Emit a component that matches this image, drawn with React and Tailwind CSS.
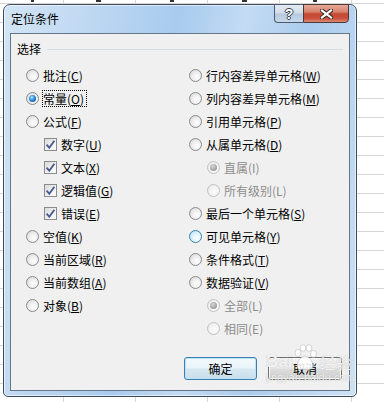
import React from "react";

const FONT = "font-['Noto_Sans_CJK_SC','Microsoft_YaHei',sans-serif]";

function Radio({ checked, disabled, hover }) {
  let ring =
    "border-[#8a8b8c] bg-[radial-gradient(circle_at_62%_62%,#ffffff_0%,#f0f0f0_40%,#d2d2d2_100%)]";
  if (hover)
    ring =
      "border-[#3c7fb1] bg-[radial-gradient(circle_at_62%_62%,#ffffff_0%,#e3f5fe_40%,#a8dbf6_100%)]";
  if (disabled)
    ring =
      "border-[#c2c2c2] bg-[radial-gradient(circle_at_62%_62%,#fcfcfc_0%,#f3f3f3_50%,#e3e3e3_100%)]";
  return (
    <span
      className={`flex h-[13px] w-[13px] shrink-0 items-center justify-center rounded-full border ${ring}`}
    >
      {checked && (
        <span
          className={`h-[7px] w-[7px] rounded-full ${
            disabled
              ? "bg-[radial-gradient(circle_at_40%_35%,#d6d6d6_0%,#a8a8a8_55%,#8c8c8c_100%)]"
              : "bg-[radial-gradient(circle_at_40%_35%,#b4eaff_0%,#2b8ddb_45%,#0c3b74_100%)]"
          }`}
        />
      )}
    </span>
  );
}

function Check() {
  return (
    <span className="flex h-[13px] w-[13px] shrink-0 items-center justify-center border border-[#8a8b8c] bg-[linear-gradient(135deg,#d9d9d9,#f7f7f7_70%)]">
      <svg width="11" height="11" viewBox="0 0 11 11">
        <path
          d="M1.6 5.6 L4.3 8.8 L9.4 1.8"
          fill="none"
          stroke="#4a5d92"
          strokeWidth="1.9"
          strokeLinejoin="miter"
        />
      </svg>
    </span>
  );
}

function Label({ text, k, focus, disabled }) {
  return (
    <span
      className={`whitespace-nowrap border text-[12px] leading-[15px] ${
        focus ? "border-dotted border-black pr-[2px]" : "border-transparent"
      } ${disabled ? "text-[#8d8d8d]" : "text-black"}`}
    >
      {text}(
      {disabled ? k : <u className="underline">{k}</u>})
    </span>
  );
}

function Row({ type = "radio", indent, text, k, checked, disabled, hover, focus }) {
  return (
    <div className={`flex h-[23px] items-center gap-[3px] ${indent ? "pl-[18px]" : ""}`}>
      {type === "check" ? (
        <Check />
      ) : (
        <Radio checked={checked} disabled={disabled} hover={hover} />
      )}
      <Label text={text} k={k} focus={focus} disabled={disabled} />
    </div>
  );
}

const left = [
  { text: "批注", k: "C" },
  { text: "常量", k: "O", checked: true, focus: true },
  { text: "公式", k: "F" },
  { text: "数字", k: "U", type: "check", indent: true },
  { text: "文本", k: "X", type: "check", indent: true },
  { text: "逻辑值", k: "G", type: "check", indent: true },
  { text: "错误", k: "E", type: "check", indent: true },
  { text: "空值", k: "K" },
  { text: "当前区域", k: "R" },
  { text: "当前数组", k: "A" },
  { text: "对象", k: "B" },
];

const right = [
  { text: "行内容差异单元格", k: "W" },
  { text: "列内容差异单元格", k: "M" },
  { text: "引用单元格", k: "P" },
  { text: "从属单元格", k: "D" },
  { text: "直属", k: "I", indent: true, disabled: true, checked: true },
  { text: "所有级别", k: "L", indent: true, disabled: true },
  { text: "最后一个单元格", k: "S" },
  { text: "可见单元格", k: "Y", hover: true },
  { text: "条件格式", k: "T" },
  { text: "数据验证", k: "V" },
  { text: "全部", k: "L", indent: true, disabled: true, checked: true },
  { text: "相同", k: "E", indent: true, disabled: true },
];

function Grid() {
  const hs = [];
  for (let k = 0; k < 22; k++) hs.push(3.5 + 19 * k);
  const vs = [63.5, 135.5, 207.5, 279.5, 351.5];
  return (
    <svg className="absolute inset-0" width="384" height="402">
      {hs.map((y) => (
        <line key={"h" + y} x1="0" x2="384" y1={y} y2={y} stroke="#d6d6d6" strokeWidth="1" />
      ))}
      {vs.map((x) => (
        <line key={"v" + x} x1={x} x2={x} y1="0" y2="402" stroke="#d6d6d6" strokeWidth="1" />
      ))}
      <rect x="31" y="0" width="3" height="2" fill="#333" />
      <rect x="96" y="0" width="5" height="2" fill="#333" />
      <rect x="170" y="0" width="4" height="2" fill="#333" />
      <rect x="242" y="0" width="5" height="2" fill="#333" />
      <rect x="313" y="0" width="4" height="2" fill="#333" />
    </svg>
  );
}

function Paw() {
  return (
    <svg width="26" height="28" viewBox="0 0 26 28">
      <g fill="rgba(255,255,255,0.85)" stroke="rgba(120,120,120,0.35)" strokeWidth="0.8">
        <ellipse cx="6" cy="9" rx="3" ry="3.6" />
        <ellipse cx="11" cy="4" rx="2.8" ry="3.4" />
        <ellipse cx="17" cy="4" rx="2.8" ry="3.4" />
        <ellipse cx="21.5" cy="10" rx="3" ry="3.6" />
        <path d="M13 12 C9 12 5 18 5 22 C5 26 9 26 13 25 C17 26 21 26 21 22 C21 18 17 12 13 12 Z" />
      </g>
    </svg>
  );
}

export default function App() {
  return (
    <div className={`relative h-[402px] w-[384px] overflow-hidden bg-white ${FONT}`}>
      <Grid />
      <div className="absolute left-[3px] top-[4px] flex h-[393px] w-[354px] flex-col rounded-t-[7px] rounded-b-[5px] border border-[#3f4c5c] bg-[linear-gradient(100deg,#d3e5f6_0%,#bed7f1_22%,#a8cbee_42%,#c4dbf3_58%,#aacbed_74%,#cfe2f5_100%)] px-[6px] pb-[5px] shadow-[inset_0_0_0_1px_rgba(255,255,255,0.55)]">
        <div className="flex h-[28px] items-start justify-between">
          <span className="ml-px mt-[6px] text-[12px] leading-[16px] text-black">定位条件</span>
          <div className="-mt-px mr-px flex">
            <div className="flex h-[19px] w-[29px] items-center justify-center rounded-bl-[4px] border border-r-0 border-[#4b5a6c] bg-[linear-gradient(#e3ebf4_0%,#d1dcea_48%,#b6c8dd_52%,#c8d8ea_100%)]">
              <span className="font-['Liberation_Sans',sans-serif] text-[14px] font-bold leading-none text-white [text-shadow:1px_0_0_#3a4250,-1px_0_0_#3a4250,0_1px_0_#3a4250,0_-1px_0_#3a4250]">
                ?
              </span>
            </div>
            <div className="flex h-[19px] w-[46px] items-center justify-center rounded-br-[4px] border border-[#4b3a36] bg-[linear-gradient(#e8a898_0%,#d98470_40%,#c64a31_52%,#c9503a_78%,#dc8a77_100%)]">
              <svg width="13" height="10" viewBox="0 0 13 10">
                <path d="M2 1.5 L11 8.5 M11 1.5 L2 8.5" stroke="#3b2b28" strokeWidth="4.2" strokeLinecap="square" />
                <path d="M2 1.5 L11 8.5 M11 1.5 L2 8.5" stroke="#ffffff" strokeWidth="2.2" strokeLinecap="square" />
              </svg>
            </div>
          </div>
        </div>
        <div className="flex flex-1 flex-col border border-[#667689] bg-[#f0f0f0]">
          <div className="flex items-center gap-[6px] pl-[6px] pr-[6px] pt-[7px]">
            <span className="text-[12px] leading-[16px] text-black">选择</span>
            <div className="h-px flex-1 bg-[#d5dde3]" />
          </div>
          <div className="mt-[7px] grid grid-cols-[163px_1fr] pl-[15px]">
            <div className="flex flex-col">
              {left.map((r, i) => (
                <Row key={i} {...r} />
              ))}
            </div>
            <div className="flex flex-col">
              {right.map((r, i) => (
                <Row key={i} {...r} />
              ))}
            </div>
          </div>
          <div className="flex-1" />
          <div className="flex justify-end gap-[11px] pb-[10px] pr-[7px]">
            <button className="flex h-[23px] w-[73px] items-center justify-center rounded-[3px] border border-[#3c7fb1] bg-[linear-gradient(#f4fafd_0%,#e9f3f9_48%,#d8e8f2_52%,#c9deeb_100%)] text-[12px] text-black shadow-[inset_0_0_0_1px_#b8e3f8]">
              确定
            </button>
            <button className="flex h-[23px] w-[74px] items-center justify-center rounded-[3px] border border-[#707070] bg-[linear-gradient(#f2f2f2_0%,#ebebeb_48%,#dddddd_52%,#cfcfcf_100%)] text-[12px] text-black shadow-[inset_0_0_0_1px_#fcfcfc]">
              取消
            </button>
          </div>
        </div>
      </div>
      <div className="pointer-events-none absolute left-[266px] top-[344px] flex flex-col">
        <div className="flex items-end">
          <span className="font-['Liberation_Sans',sans-serif] text-[17px] font-bold leading-[20px] text-white/85 [text-shadow:0_0_1px_rgba(80,80,80,0.45)]">
            Bai
          </span>
          <Paw />
          <span className="ml-px text-[16px] leading-[20px] text-white/85 [text-shadow:0_0_1px_rgba(80,80,80,0.45)]">
            经验
          </span>
        </div>
        <span className="-mt-[1px] font-['Liberation_Sans',sans-serif] text-[11px] leading-[13px] text-white/85 [text-shadow:0_0_1px_rgba(80,80,80,0.45)]">
          jingyan.baidu.com
        </span>
      </div>
    </div>
  );
}
